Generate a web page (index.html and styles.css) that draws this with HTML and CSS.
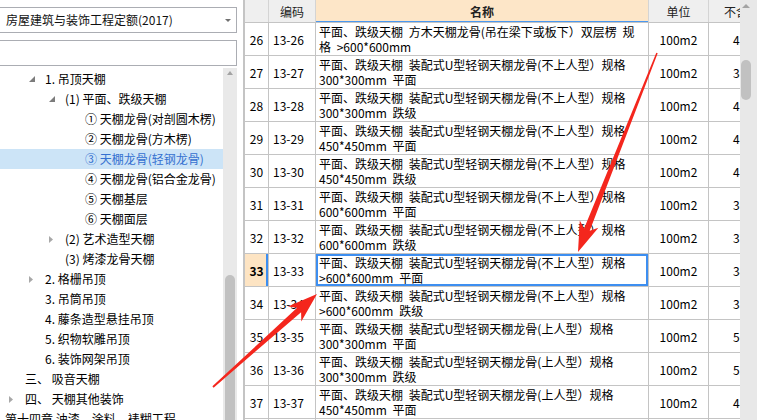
FILE: index.html
```html
<!DOCTYPE html>
<html lang="zh-CN">
<head>
<meta charset="utf-8">
<title>定额</title>
<link rel="stylesheet" href="styles.css">
</head>
<body>
<div class="left">
  <div class="combo">
    <span class="combo-text">房屋建筑与装饰工程定额(2017)</span>
    <svg class="combo-arrow" width="6" height="3" viewBox="0 0 6 3"><polygon points="0,0 6,0 3,3"/></svg>
  </div>
  <div class="search"></div>
  <div class="tree">
    <div class="rows">
      <div class="node l2"><span class="tw"><svg class="exp" width="6" height="6" viewBox="0 0 6 6"><polygon points="6,0 6,6 0,6"/></svg></span>1. 吊顶天棚</div>
      <div class="node l3"><span class="tw"><svg class="exp" width="6" height="6" viewBox="0 0 6 6"><polygon points="6,0 6,6 0,6"/></svg></span>(1) 平面、跌级天棚</div>
      <div class="node l4"><span class="tw"></span>① 天棚龙骨(对剖圆木楞)</div>
      <div class="node l4"><span class="tw"></span>② 天棚龙骨(方木楞)</div>
      <div class="node l4 sel"><span class="tw"></span>③ 天棚龙骨(轻钢龙骨)</div>
      <div class="node l4"><span class="tw"></span>④ 天棚龙骨(铝合金龙骨)</div>
      <div class="node l4"><span class="tw"></span>⑤ 天棚基层</div>
      <div class="node l4"><span class="tw"></span>⑥ 天棚面层</div>
      <div class="node l3"><span class="tw"><svg class="col" width="4" height="7" viewBox="0 0 4 7"><polygon points="0,0 4,3.5 0,7"/></svg></span>(2) 艺术造型天棚</div>
      <div class="node l3"><span class="tw"></span>(3) 烤漆龙骨天棚</div>
      <div class="node l2"><span class="tw"><svg class="col" width="4" height="7" viewBox="0 0 4 7"><polygon points="0,0 4,3.5 0,7"/></svg></span>2. 格栅吊顶</div>
      <div class="node l2"><span class="tw"></span>3. 吊筒吊顶</div>
      <div class="node l2"><span class="tw"></span>4. 藤条造型悬挂吊顶</div>
      <div class="node l2"><span class="tw"></span>5. 织物软雕吊顶</div>
      <div class="node l2"><span class="tw"></span>6. 装饰网架吊顶</div>
      <div class="node l1"><span class="tw"></span>三、 吸音天棚</div>
      <div class="node l1"><span class="tw"><svg class="col" width="4" height="7" viewBox="0 0 4 7"><polygon points="0,0 4,3.5 0,7"/></svg></span>四、 天棚其他装饰</div>
      <div class="node l0">第十四章 油漆、涂料、裱糊工程</div>
    </div>
    <div class="tscroll">
      <svg class="tup" width="6" height="4" viewBox="0 0 6 4"><polygon points="0,4 6,4 3,0"/></svg>
      <div class="tthumb"></div>
    </div>
  </div>
</div>

<div class="grid">
  <div class="hrow">
    <div class="hc"></div>
    <div class="hc">编码</div>
    <div class="hc hsel">名称</div>
    <div class="hc">单位</div>
    <div class="hc hval">不含税基期价</div>
  </div>

  <div class="row"><div class="c num">26</div><div class="c code">13-26</div><div class="c name">平面、跌级天棚 方木天棚龙骨(吊在梁下或板下）双层楞 规<br>格 &gt;600*600mm</div><div class="c unit">100m2</div><div class="c val">4216.38</div></div>
  <div class="row"><div class="c num">27</div><div class="c code">13-27</div><div class="c name">平面、跌级天棚 装配式U型轻钢天棚龙骨(不上人型）规格<br>300*300mm 平面</div><div class="c unit">100m2</div><div class="c val">3854.72</div></div>
  <div class="row"><div class="c num">28</div><div class="c code">13-28</div><div class="c name">平面、跌级天棚 装配式U型轻钢天棚龙骨(不上人型）规格<br>300*300mm 跌级</div><div class="c unit">100m2</div><div class="c val">4102.55</div></div>
  <div class="row"><div class="c num">29</div><div class="c code">13-29</div><div class="c name">平面、跌级天棚 装配式U型轻钢天棚龙骨(不上人型）规格<br>450*450mm 平面</div><div class="c unit">100m2</div><div class="c val">4011.20</div></div>
  <div class="row"><div class="c num">30</div><div class="c code">13-30</div><div class="c name">平面、跌级天棚 装配式U型轻钢天棚龙骨(不上人型）规格<br>450*450mm 跌级</div><div class="c unit">100m2</div><div class="c val">4185.47</div></div>
  <div class="row"><div class="c num">31</div><div class="c code">13-31</div><div class="c name">平面、跌级天棚 装配式U型轻钢天棚龙骨(不上人型）规格<br>600*600mm 平面</div><div class="c unit">100m2</div><div class="c val">3627.09</div></div>
  <div class="row"><div class="c num">32</div><div class="c code">13-32</div><div class="c name">平面、跌级天棚 装配式U型轻钢天棚龙骨(不上人型）规格<br>600*600mm 跌级</div><div class="c unit">100m2</div><div class="c val">3790.63</div></div>
  <div class="row"><div class="c num cur">33</div><div class="c code">13-33</div><div class="c name focus">平面、跌级天棚 装配式U型轻钢天棚龙骨(不上人型）规格<br>&gt;600*600mm 平面</div><div class="c unit">100m2</div><div class="c val">3418.26</div></div>
  <div class="row"><div class="c num">34</div><div class="c code">13-34</div><div class="c name">平面、跌级天棚 装配式U型轻钢天棚龙骨(不上人型）规格<br>&gt;600*600mm 跌级</div><div class="c unit">100m2</div><div class="c val">3582.14</div></div>
  <div class="row"><div class="c num">35</div><div class="c code">13-35</div><div class="c name">平面、跌级天棚 装配式U型轻钢天棚龙骨(上人型）规格<br>300*300mm 平面</div><div class="c unit">100m2</div><div class="c val">5034.88</div></div>
  <div class="row"><div class="c num">36</div><div class="c code">13-36</div><div class="c name">平面、跌级天棚 装配式U型轻钢天棚龙骨(上人型）规格<br>300*300mm 跌级</div><div class="c unit">100m2</div><div class="c val">5261.40</div></div>
  <div class="row"><div class="c num">37</div><div class="c code">13-37</div><div class="c name">平面、跌级天棚 装配式U型轻钢天棚龙骨(上人型）规格<br>450*450mm 平面</div><div class="c unit">100m2</div><div class="c val">4873.52</div></div>
  <div class="row"><div class="c num">38</div><div class="c code">13-38</div><div class="c name">平面、跌级天棚 装配式U型轻钢天棚龙骨(上人型）规格<br>450*450mm 跌级</div><div class="c unit">100m2</div><div class="c val">5012.73</div></div>
</div>

<div class="vbar">
  <svg class="vup" width="8" height="4" viewBox="0 0 8 4"><polygon points="0,4 8,4 4,0"/></svg>
  <div class="vthumb"></div>
</div>

<svg class="marks" width="757" height="420" viewBox="0 0 757 420">
  <polygon points="657.7,53.3 589.7,230.8 598.4,227.8 578,252 579.8,220.4 584.1,228.6 656.3,52.7"/>
  <polygon points="213.6,387.7 301.1,312.2 301.3,321.5 317,294 287.9,306.5 297.1,307.8 212.4,386.3"/>
</svg>
</body>
</html>
```

FILE: styles.css
```css
* { box-sizing: border-box; margin: 0; padding: 0; }

html, body {
  width: 757px;
  height: 420px;
  overflow: hidden;
  background: #ffffff;
}

body {
  position: relative;
  display: flex;
  font-family: "Noto Sans CJK SC", "Noto Sans", sans-serif;
  font-size: 12px;
  color: #111;
}

/* ---------- left panel ---------- */
.left {
  width: 237px;
  flex: none;
  display: flex;
  flex-direction: column;
  height: 420px;
}

.combo {
  margin: 7px 0 0 -10px;
  width: 247px;
  height: 26px;
  border: 1px solid #abadb3;
  display: flex;
  align-items: center;
  padding-left: 15px;
  padding-right: 5px;
  background: #fff;
}
.combo-text { flex: 1; white-space: nowrap; line-height: 16px; }
.combo-arrow { fill: #707070; }

.search {
  margin: 7px 0 0 -10px;
  width: 247px;
  height: 26px;
  border: 1px solid #abadb3;
  background: #fff;
}

.tree {
  margin-top: 2px;
  flex: 1;
  display: flex;
  overflow: hidden;
}

.rows {
  width: 223px;
  flex: none;
  padding-top: 1px;
}

.node {
  height: 20px;
  display: flex;
  align-items: center;
  white-space: nowrap;
  line-height: 20px;
  color: #000;
}
.node.sel { background: #cce4f7; color: #3470d0; }
.l0 { padding-left: 5px; }
.l1 { padding-left: 5px; }
.l2 { padding-left: 25px; }
.l3 { padding-left: 45px; }
.l4 { padding-left: 65px; }

.tw {
  width: 20px;
  flex: none;
  display: flex;
  align-items: center;
  padding-left: 4px;
}
.exp { fill: #7c7c7c; }
.col { fill: #a8a8a8; }

.tscroll {
  width: 14px;
  flex: none;
  background: #e9e9e9;
  display: flex;
  flex-direction: column;
}
.tup { fill: #a3a3a3; margin: 3px 0 0 4px; flex: none; }
.tthumb {
  margin: 200px 0 0 2px;
  width: 10px;
  height: 200px;
  background: #c1c1c1;
  border-radius: 5px 5px 0 0;
  flex: none;
}

/* ---------- grid ---------- */
.grid {
  margin-left: 6px;
  width: 497px;
  flex: none;
  border-left: 2px solid #c4c4c4;
  overflow: hidden;
  height: 420px;
}

.hrow, .row {
  display: grid;
  grid-template-columns: 24px 47px 333px 60px 100px;
  width: 564px;
}

.hrow {
  height: 23px;
  background: #efefef;
  border-bottom: 1px solid #c4c4c4;
}
.hc {
  border-right: 1px solid #d4d4d4;
  display: flex;
  align-items: center;
  justify-content: center;
  color: #222;
  white-space: nowrap;
}
.hc.hsel {
  background: #fde6c8;
  font-weight: bold;
  box-shadow: inset 0 -1px 0 #4a98f0;
}
.hc.hval { justify-content: flex-start; padding-left: 15px; }

.row { height: 33px; }
.c {
  border-right: 1px solid #c4c4c4;
  border-bottom: 1px solid #c4c4c4;
  color: #000;
  white-space: nowrap;
  overflow: hidden;
}
.num {
  display: flex;
  align-items: center;
  justify-content: center;
}
.num.cur {
  background: #fde4c3;
  font-weight: bold;
  box-shadow: inset -2px 0 0 #3d8ef0;
}
.code {
  display: flex;
  align-items: center;
  padding-left: 4px;
}
.name {
  padding: 1px 0 0 3px;
  line-height: 15px;
  word-spacing: 3px;
}
.name.focus { box-shadow: inset 0 0 0 2px #3d8ef0; }
.unit {
  display: flex;
  align-items: center;
  justify-content: center;
}
.val {
  display: flex;
  align-items: center;
  padding-left: 24px;
  border-right: none;
}

/* ---------- right scrollbar ---------- */
.vbar {
  width: 17px;
  flex: none;
  background: #e8e8e8;
  display: flex;
  flex-direction: column;
}
.vup { fill: #a3a3a3; margin: 4px 0 0 2px; flex: none; }
.vthumb {
  margin: 52px 0 0 1px;
  width: 10px;
  height: 40px;
  border-radius: 5px;
  background: #c1c1c1;
  flex: none;
}

/* ---------- annotation arrows ---------- */
.marks {
  position: absolute;
  left: 0;
  top: 0;
  pointer-events: none;
  fill: #f4261d;
}
```
